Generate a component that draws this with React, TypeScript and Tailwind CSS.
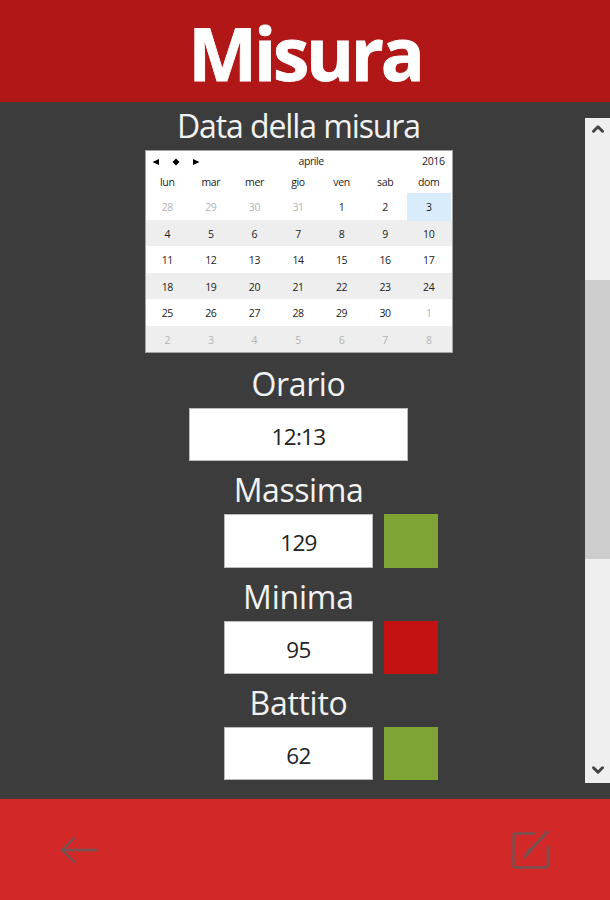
import { ChevronDown, ChevronUp } from "lucide-react";

const days = ["lun", "mar", "mer", "gio", "ven", "sab", "dom"];

const weeks = [
  [28, 29, 30, 31, 1, 2, 3],
  [4, 5, 6, 7, 8, 9, 10],
  [11, 12, 13, 14, 15, 16, 17],
  [18, 19, 20, 21, 22, 23, 24],
  [25, 26, 27, 28, 29, 30, 1],
  [2, 3, 4, 5, 6, 7, 8],
];

const isOutside = (week: number, day: number) =>
  (week === 0 && day > 20) || (week >= 4 && day < 20);

const Label = ({ text, className }: { text: string; className: string }) => (
  <div className={`flex items-end justify-center text-[32px] leading-[49px] text-[#f2f2f2] ${className}`}>
    <span className="whitespace-nowrap">{text}</span>
  </div>
);

const Calendar = () => (
  <div className="mx-auto h-[203px] w-[308px] border border-[#a5a5a5] bg-white text-[10.5px] tracking-[-0.4px] text-[#222]">
    <div className="flex h-[21px] items-center pl-[6px] pr-[7px]">
      <svg className="h-2 w-[50px] fill-black" viewBox="0 0 50 8">
        <path d="M7 1v6L0.500 4zM24 0.500l3.500 3.500-3.500 3.500-3.500-3.500zM41 1v6l6.500-3z" />
      </svg>
      <span className="ml-[97px]">aprile</span>
      <span className="ml-auto">2016</span>
    </div>
    <div className="grid h-[21px] grid-cols-7 items-center pr-[1px] text-center">
      {days.map((day) => (
        <span key={day}>{day}</span>
      ))}
    </div>
    {weeks.map((week, w) => (
      <div key={w} className={`grid h-[26.500px] grid-cols-7 pr-[1px] text-center leading-[28px] ${w % 2 ? "bg-[#eee]" : "bg-white"}`}>
        {week.map((day, d) => (
          <span
            key={d}
            className={`${isOutside(w, day) ? "text-[#b4b4b4]" : ""} ${w === 0 && d === 6 ? "bg-[#d9ecfb]" : ""}`}
          >
            {day}
          </span>
        ))}
      </div>
    ))}
  </div>
);

const Measure = ({ value, color, className }: { value: number; color: string; className: string }) => (
  <div className={`ml-[212px] flex gap-[11px] ${className}`}>
    <div className="flex w-[149px] items-center justify-center border border-[#bbb] bg-white pt-[4px] text-[22.500px] tracking-[-0.7px] text-[#222]">
      {value}
    </div>
    <div className={`w-[54px] ${color}`} />
  </div>
);

const ScrollBar = () => (
  <div className="mt-4 flex h-[665px] w-[25px] flex-col bg-[#efefef]">
    <div className="flex h-[162px] justify-center pt-[2px]">
      <ChevronUp className="h-[18px] w-[20px] text-[#444]" strokeWidth={4} />
    </div>
    <div className="h-[279px] bg-[#cdcdcd]" />
    <div className="flex flex-1 items-end justify-center pb-[4px]">
      <ChevronDown className="h-[18px] w-[20px] text-[#444]" strokeWidth={4} />
    </div>
  </div>
);

const App = () => {
  return (
    <div className="flex h-[900px] w-[610px] flex-col overflow-hidden bg-[#3c3c3c] font-['Open_Sans',sans-serif]">
      <header className="flex h-[102px] items-center justify-center bg-[#b21718] pt-[2px]">
        <h1 className="text-[73px] font-bold leading-none tracking-[-3.200px] text-white [-webkit-text-stroke:0.8px_white]">Misura</h1>
      </header>

      <main className="flex h-[697px]">
        <div className="w-[585px] pl-3">
          <Label text="Data della misura" className="h-[48px] tracking-[-1.100px]" />
          <Calendar />
          <Label text="Orario" className="h-[55px] tracking-[-0.4px]" />
          <div className="mx-auto flex h-[53px] w-[219px] items-center justify-center border border-[#bbb] bg-white pt-[4px] text-[22.500px] tracking-[-0.7px] text-[#222]">
            12:13
          </div>
          <Label text="Massima" className="h-[53px] tracking-[-0.4px]" />
          <Measure value={129} color="bg-[#7fa335]" className="h-[54px]" />
          <Label text="Minima" className="h-[53px] tracking-[-0.2px]" />
          <Measure value={95} color="bg-[#c41212]" className="h-[53px]" />
          <Label text="Battito" className="h-[53px] tracking-[-0.3px]" />
          <Measure value={62} color="bg-[#7fa335]" className="h-[53px]" />
        </div>
        <ScrollBar />
      </main>

      <footer className="flex h-[101px] items-center justify-between bg-[#d32828] pl-[60px] pr-[60px]">
        <svg className="h-[28px] w-[38px]" viewBox="0 0 38 28" fill="none" stroke="#745352" strokeWidth="2.400">
          <path d="M38 14H2M15 1.500L2 14l13 12.500" />
        </svg>
        <svg className="h-[42px] w-[40px]" viewBox="0 0 40 42" fill="none" stroke="#745352" strokeWidth="2.400">
          <path d="M25 4.500H6Q3.500 4.500 3.500 7V36Q3.500 38.500 6 38.500H35.500Q38 38.500 38 36V17" />
          <path d="M38 2L20 21.500" strokeWidth="2.800" />
          <path d="M19 19l3 3-4 4.500-6 4.500 3-6z" fill="#745352" stroke="none" />
        </svg>
      </footer>
    </div>
  );
};

export default App;
